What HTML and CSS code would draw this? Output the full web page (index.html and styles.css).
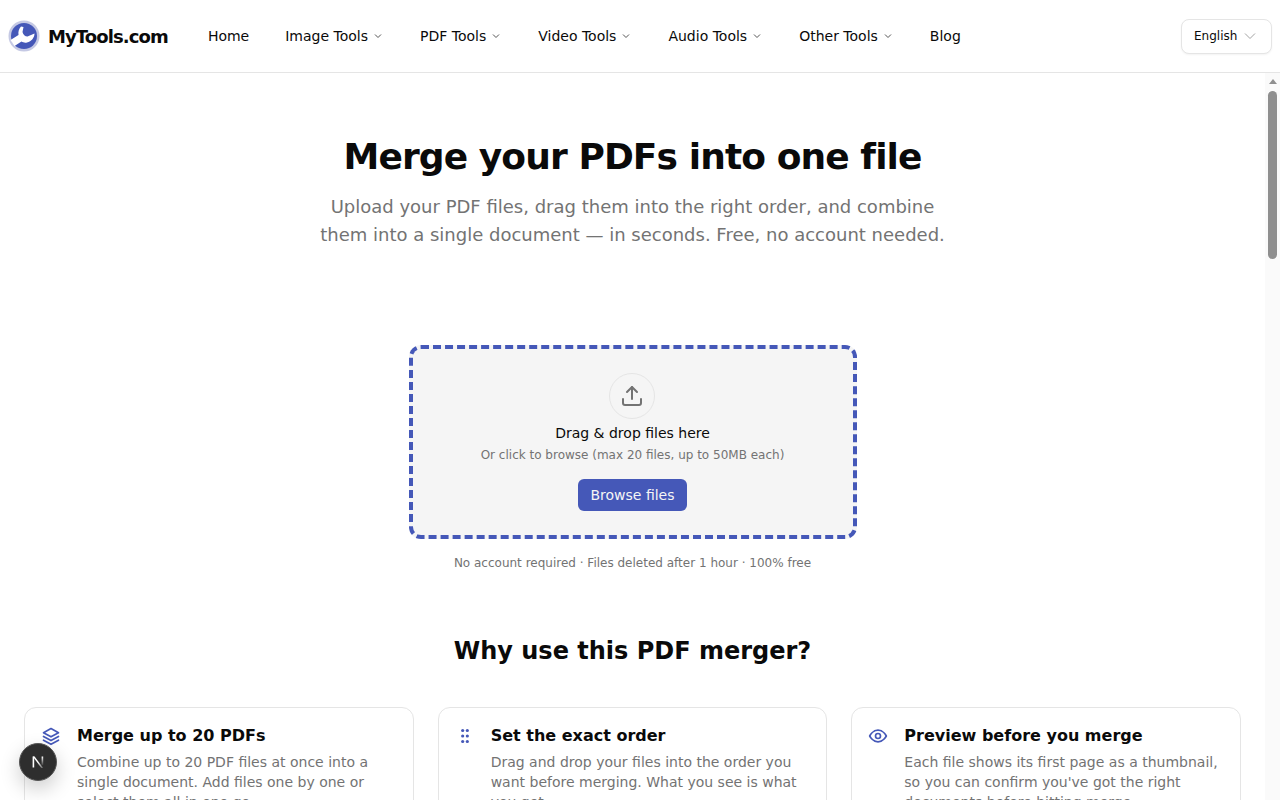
FILE: index.html
```html
<!DOCTYPE html>
<html lang="en">
<head>
  <meta charset="UTF-8">
  <meta name="viewport" content="width=device-width, initial-scale=1.0">
  <title>Merge PDF - MyTools.com</title>
  <link rel="stylesheet" href="styles.css">
</head>
<body>
  <header class="site-header">
    <a class="logo" href="#">
      <svg class="logo-icon" viewBox="0 0 32 32" aria-hidden="true">
        <circle cx="16" cy="16" r="15.5" fill="#c5c9e4"/>
        <circle cx="16" cy="16" r="13" fill="#4558b8"/>
        <path d="M2.5 20 L10.5 15 C10 11.5 11 8.5 13 6.5 L15.5 7 L14.5 12 C15 14.5 17 16.5 19.5 16.5 L26.5 13.5 C26.5 17.5 23.5 21.5 19 22.5 C17 23 15 22.5 13.5 21.5 L6.5 26 Z" fill="#fff"/>
      </svg>
      <span>MyTools.com</span>
    </a>
    <nav class="main-nav">
      <a href="#">Home</a>
      <a href="#">Image Tools <svg class="chev" viewBox="0 0 12 12"><path d="M3 4.5 L6 7.5 L9 4.5"/></svg></a>
      <a href="#">PDF Tools <svg class="chev" viewBox="0 0 12 12"><path d="M3 4.5 L6 7.5 L9 4.5"/></svg></a>
      <a href="#">Video Tools <svg class="chev" viewBox="0 0 12 12"><path d="M3 4.5 L6 7.5 L9 4.5"/></svg></a>
      <a href="#">Audio Tools <svg class="chev" viewBox="0 0 12 12"><path d="M3 4.5 L6 7.5 L9 4.5"/></svg></a>
      <a href="#">Other Tools <svg class="chev" viewBox="0 0 12 12"><path d="M3 4.5 L6 7.5 L9 4.5"/></svg></a>
      <a href="#">Blog</a>
    </nav>
    <button class="lang-select">English <svg class="lang-chev" viewBox="0 0 12 12"><path d="M1 3.5 L6 8.5 L11 3.5"/></svg></button>
  </header>

  <div class="page-body">
    <main class="content">
      <section class="hero">
        <h1>Merge your PDFs into one file</h1>
        <p>Upload your PDF files, drag them into the right order, and combine them into a single document — in seconds. Free, no account needed.</p>
      </section>

      <section class="upload">
        <div class="dropzone">
          <div class="upload-icon">
            <svg viewBox="0 0 24 24"><path d="M21 15v4a2 2 0 0 1-2 2H5a2 2 0 0 1-2-2v-4"/><path d="M17 8l-5-5-5 5"/><path d="M12 3v12"/></svg>
          </div>
          <div class="drop-title">Drag &amp; drop files here</div>
          <div class="drop-sub">Or click to browse (max 20 files, up to 50MB each)</div>
          <button class="browse-btn">Browse files</button>
        </div>
        <p class="upload-note">No account required · Files deleted after 1 hour · 100% free</p>
      </section>

      <section class="features">
        <h2>Why use this PDF merger?</h2>
        <div class="feature-grid">
          <div class="feature-card">
            <svg class="feature-icon" viewBox="0 0 24 24"><path d="M12 3 3 8l9 5 9-5-9-5Z"/><path d="m3 12.5 9 5 9-5"/><path d="m3 17 9 5 9-5"/></svg>
            <div>
              <h3>Merge up to 20 PDFs</h3>
              <p>Combine up to 20 PDF files at once into a single document. Add files one by one or select them all in one go.</p>
            </div>
          </div>
          <div class="feature-card">
            <svg class="feature-icon" viewBox="0 0 24 24"><g class="dots"><circle cx="9.2" cy="5.4" r="1.9"/><circle cx="14.8" cy="5.4" r="1.9"/><circle cx="9.2" cy="12" r="1.9"/><circle cx="14.8" cy="12" r="1.9"/><circle cx="9.2" cy="18.6" r="1.9"/><circle cx="14.8" cy="18.6" r="1.9"/></g></svg>
            <div>
              <h3>Set the exact order</h3>
              <p>Drag and drop your files into the order you want before merging. What you see is what you get.</p>
            </div>
          </div>
          <div class="feature-card">
            <svg class="feature-icon" viewBox="0 0 24 24"><path d="M2 12s3.6-7 10-7 10 7 10 7-3.6 7-10 7-10-7-10-7Z"/><circle cx="12" cy="12" r="3"/></svg>
            <div>
              <h3>Preview before you merge</h3>
              <p>Each file shows its first page as a thumbnail, so you can confirm you've got the right documents before hitting merge.</p>
            </div>
          </div>
        </div>
      </section>
    </main>
    <div class="scroll-rail">
      <div class="scroll-arrow"></div>
      <div class="scroll-thumb"></div>
    </div>
  </div>

  <button class="dev-badge" aria-label="Next.js dev tools">
    <svg viewBox="0 0 14 14">
      <defs>
        <linearGradient id="fade-right" x1="0" y1="0" x2="0" y2="1">
          <stop offset="0" stop-color="#fff"/>
          <stop offset="1" stop-color="#fff" stop-opacity="0.1"/>
        </linearGradient>
        <linearGradient id="fade-diag" x1="0" y1="0" x2="1" y2="1">
          <stop offset="0.5" stop-color="#fff"/>
          <stop offset="1" stop-color="#fff" stop-opacity="0.2"/>
        </linearGradient>
      </defs>
      <path d="M1.6 1.5h1.6V12.5H1.6Z" fill="#fff"/>
      <path d="M1.8 1.5h1.8L12.2 13h-1.9Z" fill="url(#fade-diag)"/>
      <path d="M10.6 1.5H12.2V10H10.6Z" fill="url(#fade-right)"/>
    </svg>
  </button>
</body>
</html>
```

FILE: styles.css
```css
* {
  box-sizing: border-box;
}
html, body {
  height: 100%;
}
body {
  margin: 0;
  display: flex;
  flex-direction: column;
  overflow: hidden;
  font-family: "DejaVu Sans", sans-serif;
  color: #0a0a0a;
  background: #fff;
}
a {
  color: inherit;
  text-decoration: none;
}
.site-header {
  flex: none;
  height: 73px;
  display: flex;
  align-items: center;
  padding: 0 8px;
  border-bottom: 1px solid #e5e5e5;
}
.logo {
  display: flex;
  align-items: center;
  gap: 8px;
  font-size: 18px;
  font-weight: 700;
  letter-spacing: -0.9px;
}
.logo-icon {
  width: 32px;
  height: 32px;
}
.main-nav {
  display: flex;
  align-items: center;
  gap: 36px;
  margin-left: 40px;
  font-size: 14px;
}
.main-nav a {
  display: flex;
  align-items: center;
  gap: 4px;
}
.chev {
  width: 12px;
  height: 12px;
  fill: none;
  stroke: #555;
  stroke-width: 1;
}
.lang-select {
  margin-left: auto;
  width: 91px;
  height: 35px;
  display: flex;
  align-items: center;
  justify-content: space-between;
  padding: 0 15px 0 12px;
  font: 12px "DejaVu Sans", sans-serif;
  color: #0a0a0a;
  background: #fff;
  border: 1px solid #e5e5e5;
  border-radius: 8px;
  box-shadow: 0 1px 2px rgba(0, 0, 0, 0.05);
}
.lang-chev {
  width: 12px;
  height: 12px;
  fill: none;
  stroke: #a3a3a3;
  stroke-width: 1;
}
.page-body {
  flex: 1;
  min-height: 0;
  display: flex;
}
.content {
  flex: 1;
  min-width: 0;
  overflow: hidden;
}
.scroll-rail {
  flex: none;
  width: 15px;
  display: flex;
  flex-direction: column;
  align-items: center;
  padding-top: 6px;
  background: #fafafa;
}
.scroll-arrow {
  width: 0;
  height: 0;
  border-left: 4.5px solid transparent;
  border-right: 4.5px solid transparent;
  border-bottom: 5px solid #8f8f8f;
}
.scroll-thumb {
  width: 9px;
  height: 168px;
  margin-top: 7px;
  background: #8f8f8f;
  border-radius: 4.5px;
}
.hero {
  padding-top: 60px;
  text-align: center;
}
.hero h1 {
  margin: 0;
  font-size: 36px;
  line-height: 48px;
  font-weight: 700;
  letter-spacing: -0.9px;
}
.hero p {
  width: 640px;
  margin: 12px auto 0;
  font-size: 18px;
  line-height: 28px;
  color: #737373;
}
.upload {
  margin-top: 96px;
  display: flex;
  flex-direction: column;
  align-items: center;
}
.dropzone {
  width: 448px;
  height: 194px;
  display: flex;
  flex-direction: column;
  align-items: center;
  padding-top: 24px;
  background: #f5f5f5;
  border: 4px dashed #4558b8;
  border-radius: 12px;
}
.upload-icon {
  width: 46px;
  height: 46px;
  margin-right: 1px;
  display: flex;
  align-items: center;
  justify-content: center;
  border: 1px solid #e5e5e5;
  border-radius: 50%;
}
.upload-icon svg {
  width: 24px;
  height: 24px;
  fill: none;
  stroke: #737373;
  stroke-width: 2;
  stroke-linecap: round;
  stroke-linejoin: round;
}
.drop-title {
  margin-top: 4px;
  font-size: 14px;
  line-height: 20px;
}
.drop-sub {
  margin-top: 4px;
  font-size: 12px;
  line-height: 16px;
  color: #737373;
}
.browse-btn {
  margin-top: 16px;
  height: 32px;
  padding: 0 12.5px;
  font: 14px "DejaVu Sans", sans-serif;
  color: #f5f5f5;
  background: #4558b8;
  border: 0;
  border-radius: 6px;
}
.upload-note {
  margin: 16px 0 0;
  font-size: 12px;
  line-height: 16px;
  color: #737373;
}
.features {
  margin-top: 62px;
  padding: 0 24px;
}
.features h2 {
  margin: 0;
  text-align: center;
  font-size: 24px;
  line-height: 36px;
  font-weight: 700;
}
.feature-grid {
  margin-top: 38px;
  display: grid;
  grid-template-columns: repeat(3, 1fr);
  gap: 24px;
}
.feature-card {
  display: flex;
  gap: 16px;
  padding: 16px;
  border: 1px solid #e5e5e5;
  border-radius: 12px;
}
.feature-icon {
  flex: none;
  width: 20px;
  height: 20px;
  margin-top: 2px;
  fill: none;
  stroke: #4558b8;
  stroke-width: 2;
  stroke-linecap: round;
  stroke-linejoin: round;
}
.feature-card .dots {
  fill: #4558b8;
  stroke: none;
}
.feature-card h3 {
  margin: 0;
  font-size: 16px;
  line-height: 24px;
  font-weight: 700;
}
.feature-card p {
  margin: 4px 0 0;
  font-size: 14px;
  line-height: 20px;
  color: #737373;
}
.dev-badge {
  position: fixed;
  left: 19px;
  bottom: 19px;
  width: 38px;
  height: 38px;
  display: flex;
  align-items: center;
  justify-content: center;
  padding: 0;
  background: #2e2e2e;
  border: 1px solid #555;
  border-radius: 50%;
  box-shadow: 0 8px 20px rgba(0, 0, 0, 0.2);
}
.dev-badge svg {
  width: 14px;
  height: 14px;
}
```
